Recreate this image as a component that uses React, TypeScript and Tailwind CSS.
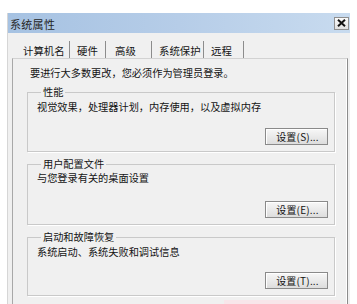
const font = { fontFamily: '"Noto Sans CJK SC", "Noto Sans", sans-serif' };

const tabs = [
  { label: '计算机名', w: 'w-[54px]' },
  { label: '硬件', w: 'w-[36px]' },
  { label: '高级', w: 'w-[46px]', active: true },
  { label: '系统保护', w: 'w-[52px]' },
  { label: '远程', w: 'w-[40px]' },
];

function SetButton({ label }: { label: string }) {
  return (
    <div className="flex justify-end pr-[6px]">
      <button className="w-[63px] h-[17px] border border-[#8a8a8a] bg-[linear-gradient(to_bottom,#f7f7f7,#dddddd)] shadow-[inset_1px_1px_0_#ffffff] text-[10px] leading-[15px] text-[#141414] pl-[2px] tracking-[0.2px] whitespace-nowrap">
        {label}
      </button>
    </div>
  );
}

function Group({
  title,
  desc,
  button,
  className,
  descMt,
  btnMt,
}: {
  title: string;
  desc: string;
  button: string;
  className?: string;
  descMt: string;
  btnMt: string;
}) {
  return (
    <fieldset className={`border border-[#c9c9c9] shadow-[1px_1px_0_#ffffff] pl-[9px] pb-[6px] ${className ?? ''}`}>
      <legend className="ml-[4px] px-[2px] text-[10.2px] leading-[12px] text-[#141414]">{title}</legend>
      <p className={`${descMt} text-[10.2px] leading-[12px] text-[#141414] whitespace-nowrap`}>{desc}</p>
      <div className={btnMt}>
        <SetButton label={button} />
      </div>
    </fieldset>
  );
}

function Tab({ label, w, active }: { label: string; w: string; active?: boolean }) {
  return (
    <div
      className={`${w} h-[17px] flex items-end pb-[1px] text-[10.4px] leading-[12px] text-[#141414] border-r border-r-[#8c8c8c] ${
        active ? 'justify-center -mb-px pr-[6px] bg-[#f0f0f0]' : 'pl-[7px]'
      }`}
    >
      {label}
    </div>
  );
}

export default function App() {
  return (
    <div className="relative w-[357px] h-[304px] bg-white overflow-hidden pt-[13px] pl-[7px]" style={font}>
      <div className="w-[343px] h-[291px] bg-[#f0f0f0] border-l border-[#d6d6d6] overflow-hidden">
        <div className="h-[20px] bg-[linear-gradient(to_right,#a6c2e2,#b6cde8_50%,#c8dbef)] flex items-center justify-between pl-[2px] pr-[1px]">
          <span className="text-[11px] leading-[12px] pt-[2px] text-[#262626] tracking-[0.3px]">系统属性</span>
          <div className="w-[15px] h-[13px] border border-[#8f8f8f] bg-[linear-gradient(to_bottom,#fbfbfb,#e0e0e0)] flex items-center justify-center">
            <svg width="9" height="8" viewBox="0 0 9 8">
              <path d="M1 0.8 L8 7.2 M8 0.8 L1 7.2" stroke="#111" strokeWidth="2" />
            </svg>
          </div>
        </div>

        <div className="pl-[4px] pr-[2px] mt-[8px]">
          <div className="flex h-[17px] pl-[4px]">
            {tabs.map((t) => (
              <Tab key={t.label} {...t} />
            ))}
          </div>
          <div className="h-[260px] border border-[#a8a8a8] border-t-[#d2d2d2] border-r-[#8c8c8c] shadow-[inset_-1px_0_0_#ffffff] pt-[8px] pl-[14px] pr-[12px]">
            <p className="pl-[3px] text-[10.2px] leading-[12px] text-[#141414] whitespace-nowrap">
              要进行大多数更改，您必须作为管理员登录。
            </p>
            <Group
              className="mt-[7px]"
              title="性能"
              desc="视觉效果，处理器计划，内存使用，以及虚拟内存"
              button="设置(S)..."
              descMt="mt-[3px]"
              btnMt="mt-[15px]"
            />
            <Group
              className="mt-[6px]"
              title="用户配置文件"
              desc="与您登录有关的桌面设置"
              button="设置(E)..."
              descMt="mt-[2px]"
              btnMt="mt-[17px]"
            />
            <Group
              className="mt-[6px]"
              title="启动和故障恢复"
              desc="系统启动、系统失败和调试信息"
              button="设置(T)..."
              descMt="mt-[3px]"
              btnMt="mt-[14px]"
            />
          </div>
        </div>
      </div>
      <div className="absolute left-[224px] bottom-0 w-[116px] h-[4px] bg-[#f8e6ea]" />
    </div>
  );
}
